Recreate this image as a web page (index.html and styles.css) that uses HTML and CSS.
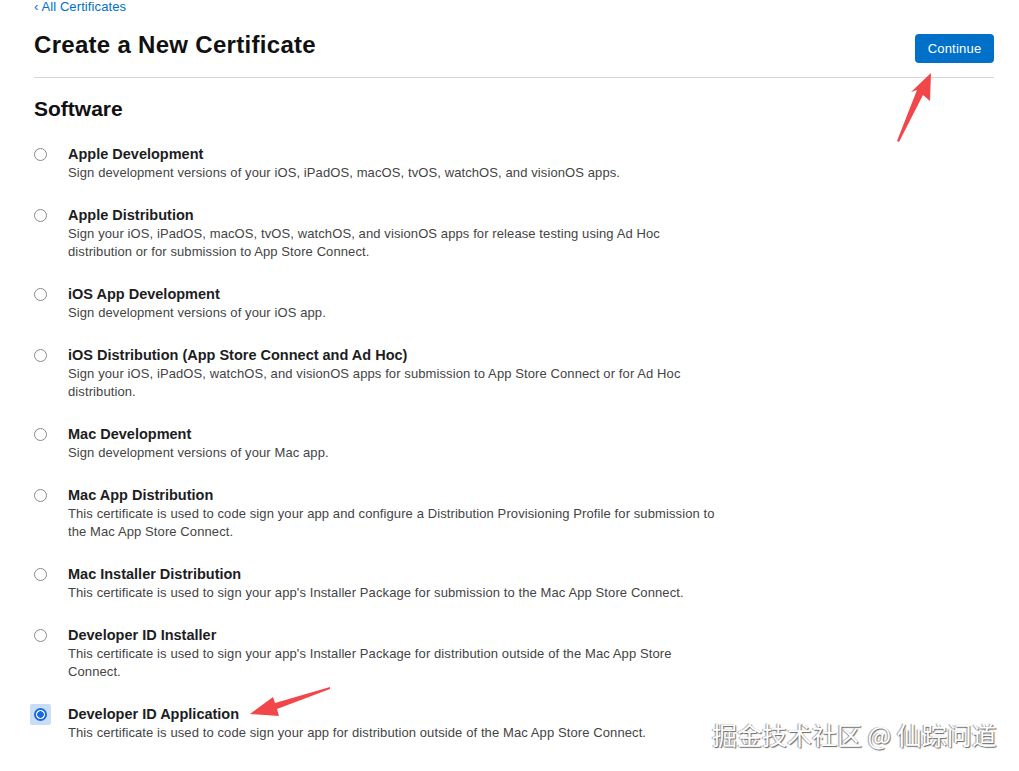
FILE: index.html
```html
<!DOCTYPE html>
<html lang="en">
<head>
    <meta charset="UTF-8">
    <title>Create a New Certificate</title>
    <link rel="stylesheet" href="styles.css">
</head>
<body>

<div class="page">
    <a class="back-link" href="#">&lsaquo; All Certificates</a>

    <div class="header">
        <h1>Create a New Certificate</h1>
        <button class="btn-continue">Continue</button>
    </div>

    <h2>Software</h2>

    <ul class="cert-list">
        <li class="cert-item">
            <span class="radio"></span>
            <div class="cert-text">
                <div class="cert-title">Apple Development</div>
                <p class="cert-desc">Sign development versions of your iOS, iPadOS, macOS, tvOS, watchOS, and visionOS apps.</p>
            </div>
        </li>
        <li class="cert-item">
            <span class="radio"></span>
            <div class="cert-text">
                <div class="cert-title">Apple Distribution</div>
                <p class="cert-desc">Sign your iOS, iPadOS, macOS, tvOS, watchOS, and visionOS apps for release testing using Ad Hoc distribution or for submission to App Store Connect.</p>
            </div>
        </li>
        <li class="cert-item">
            <span class="radio"></span>
            <div class="cert-text">
                <div class="cert-title">iOS App Development</div>
                <p class="cert-desc">Sign development versions of your iOS app.</p>
            </div>
        </li>
        <li class="cert-item">
            <span class="radio"></span>
            <div class="cert-text">
                <div class="cert-title">iOS Distribution (App Store Connect and Ad Hoc)</div>
                <p class="cert-desc">Sign your iOS, iPadOS, watchOS, and visionOS apps for submission to App Store Connect or for Ad Hoc distribution.</p>
            </div>
        </li>
        <li class="cert-item">
            <span class="radio"></span>
            <div class="cert-text">
                <div class="cert-title">Mac Development</div>
                <p class="cert-desc">Sign development versions of your Mac app.</p>
            </div>
        </li>
        <li class="cert-item">
            <span class="radio"></span>
            <div class="cert-text">
                <div class="cert-title">Mac App Distribution</div>
                <p class="cert-desc">This certificate is used to code sign your app and configure a Distribution Provisioning Profile for submission to the Mac App Store Connect.</p>
            </div>
        </li>
        <li class="cert-item">
            <span class="radio"></span>
            <div class="cert-text">
                <div class="cert-title">Mac Installer Distribution</div>
                <p class="cert-desc">This certificate is used to sign your app's Installer Package for submission to the Mac App Store Connect.</p>
            </div>
        </li>
        <li class="cert-item">
            <span class="radio"></span>
            <div class="cert-text">
                <div class="cert-title">Developer ID Installer</div>
                <p class="cert-desc">This certificate is used to sign your app's Installer Package for distribution outside of the Mac App Store Connect.</p>
            </div>
        </li>
        <li class="cert-item">
            <span class="radio checked"></span>
            <div class="cert-text">
                <div class="cert-title">Developer ID Application</div>
                <p class="cert-desc">This certificate is used to code sign your app for distribution outside of the Mac App Store Connect.</p>
            </div>
        </li>
    </ul>
</div>

<!-- annotation arrows -->
<svg class="arrow arrow-continue" width="60" height="84" viewBox="0 0 60 84">
    <polygon points="41,9 40,37 33,31 9,78 7,77 27,26 21,28" fill="#f2474a"/>
</svg>
<svg class="arrow arrow-app" width="90" height="42" viewBox="0 0 90 42">
    <polygon points="6,32 29,15 31,21 86,5 86,7 33,27 35,34" fill="#f2474a"/>
</svg>

<div class="watermark">掘金技术社区 @ 仙踪问道</div>

</body>
</html>
```

FILE: styles.css
```css
body {
    margin: 0;
    background: #fff;
    font-family: "Liberation Sans", Arial, sans-serif;
    color: #1d1d1f;
}
.page {
    width: 960px;
    margin-left: 34px;
    margin-top: -2px;
}
.back-link {
    display: block;
    font-size: 13px;
    line-height: 18px;
    letter-spacing: 0.1px;
    color: #0070c9;
    text-decoration: none;
}
.header {
    display: flex;
    justify-content: space-between;
    align-items: flex-start;
    border-bottom: 1px solid #d6d6d6;
    padding-top: 15px;
    height: 62px;
    box-sizing: border-box;
}
.header h1 {
    margin: 0;
    font-size: 24px;
    line-height: 28px;
    letter-spacing: 0.3px;
    font-weight: bold;
    color: #111;
}
.btn-continue {
    margin-top: 3px;
    width: 79px;
    height: 29px;
    border: none;
    border-radius: 4px;
    background: #0070c9;
    color: #fff;
    font-family: inherit;
    font-size: 13px;
    letter-spacing: 0.2px;
}
h2 {
    margin: 18px 0 0;
    font-size: 21px;
    line-height: 26px;
    font-weight: bold;
    color: #111;
}
.cert-list {
    list-style: none;
    margin: 22px 0 0;
    padding: 0;
}
.cert-item {
    display: flex;
    margin-bottom: 23px;
}
.radio {
    position: relative;
    width: 11px;
    height: 11px;
    border: 1px solid #8a8a8a;
    border-radius: 50%;
    margin-top: 4px;
    flex-shrink: 0;
    background: #fff;
}
.radio.checked {
    width: 9px;
    height: 9px;
    border: 2px solid #1769e0;
    background: radial-gradient(circle, #1769e0 0 3px, #fff 3.6px);
}
.radio.checked::before {
    content: "";
    position: absolute;
    inset: -6px;
    background: #c9ddf7;
    border-radius: 2px;
    z-index: -1;
}
.cert-text {
    margin-left: 21px;
}
.cert-title {
    font-size: 14.5px;
    line-height: 20px;
    font-weight: bold;
    color: #1d1d1f;
}
.cert-desc {
    margin: 0;
    max-width: 652px;
    font-size: 13px;
    line-height: 18px;
    letter-spacing: 0.1px;
    color: #444;
}
.arrow {
    position: absolute;
}
.arrow-continue {
    left: 890px;
    top: 64px;
}
.arrow-app {
    left: 244px;
    top: 682px;
}
.watermark {
    position: absolute;
    left: 712px;
    top: 716px;
    font-family: "Noto Sans CJK SC", sans-serif;
    font-size: 25px;
    line-height: 36px;
    color: #fff;
    text-shadow: 1px 1px 1px #666, -1px 0 1px #999;
}
```
